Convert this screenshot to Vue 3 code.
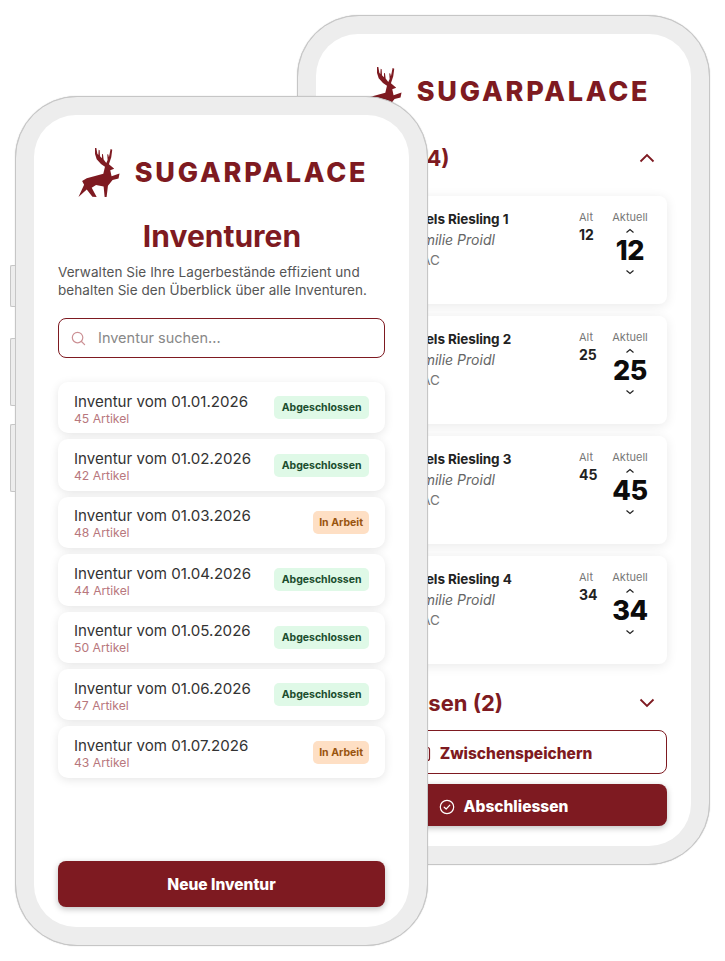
<script setup>
const inventuren = [
  { date: "01.01.2026", count: 45, done: true },
  { date: "01.02.2026", count: 42, done: true },
  { date: "01.03.2026", count: 48, done: false },
  { date: "01.04.2026", count: 44, done: true },
  { date: "01.05.2026", count: 50, done: true },
  { date: "01.06.2026", count: 47, done: true },
  { date: "01.07.2026", count: 43, done: false },
];

const weine = [
  { name: "Ried Stengels Riesling 1", alt: 12 },
  { name: "Ried Stengels Riesling 2", alt: 25 },
  { name: "Ried Stengels Riesling 3", alt: 45 },
  { name: "Ried Stengels Riesling 4", alt: 34 },
];

const stagPath =
  "M284 172 L288 172 L291 189 L294 193 L295 177 L298 179 L299 197 L305 203 L305 190 L308 191 L310 207 L318 217 L322 208 L321 191 L324 192 L326 200 L331 175 L336 177 L333 200 L326 221 L342 235 L330 239 L334 257 L358 249 L355 264 L337 269 L323 286 L319 320 L313 320 L310 288 L287 284 L274 292 L289 320 L276 319 L259 297 L234 320 L251 283 L245 272 L259 263 L309 250 L314 229 L302 220 L289 206 L284 190 Z";
</script>

<template>
  <div class="stage">
    <!-- hinteres Telefon: Inventur-Detail -->
    <div class="phone phone-back">
      <div class="screen">
        <div class="logo">
          <svg class="stag" viewBox="234 172 124 148"><path :d="stagPath" /></svg>
          <span class="logo-text">SUGARPALACE</span>
        </div>

        <div class="section-head first">
          <h2>Offene (4)</h2>
          <svg class="chevron" viewBox="0 0 16 10"><path d="M1.5 8.5 8 2l6.5 6.5" /></svg>
        </div>

        <div class="wines">
          <div v-for="w in weine" :key="w.name" class="wine">
            <div class="wine-info">
              <div class="wine-name">{{ w.name }}</div>
              <div class="wine-maker">Weingut Emilie Proidl</div>
              <div class="wine-region">Kamptal DAC</div>
            </div>
            <div class="col-alt">
              <span class="col-label">Alt</span>
              <span class="alt-value">{{ w.alt }}</span>
            </div>
            <div class="col-now">
              <span class="col-label">Aktuell</span>
              <svg class="step" viewBox="0 0 10 6"><path d="M1.5 4.5 5 1.5l3.5 3" /></svg>
              <span class="now-value">{{ w.alt }}</span>
              <svg class="step" viewBox="0 0 10 6"><path d="M1.5 1.5 5 4.5l3.5-3" /></svg>
            </div>
          </div>
        </div>

        <div class="section-head second">
          <h2>Abgelassen (2)</h2>
          <svg class="chevron" viewBox="0 0 16 10"><path d="M1.5 1.5 8 8l6.5-6.5" /></svg>
        </div>

        <button class="btn-outline">
          <svg class="btn-icon" viewBox="0 0 16 16"><rect x="1.5" y="1.5" width="13" height="13" rx="2" /></svg>
          Zwischenspeichern
        </button>
        <button class="btn-solid btn-finish">
          <svg class="btn-icon" viewBox="0 0 16 16">
            <circle cx="8" cy="8" r="6.7" />
            <path d="M5.2 8.2 7.2 10l3.6-3.8" />
          </svg>
          Abschliessen
        </button>
      </div>
    </div>

    <!-- vorderes Telefon: Inventurliste -->
    <div class="phone phone-front">
      <span class="side-btn side-1"></span>
      <span class="side-btn side-2"></span>
      <span class="side-btn side-3"></span>
      <div class="screen">
        <div class="logo">
          <svg class="stag" viewBox="234 172 124 148"><path :d="stagPath" /></svg>
          <span class="logo-text">SUGARPALACE</span>
        </div>

        <h1>Inventuren</h1>
        <p class="intro">
          Verwalten Sie Ihre Lagerbestände effizient und<br />
          behalten Sie den Überblick über alle Inventuren.
        </p>

        <div class="search">
          <svg class="search-icon" viewBox="0 0 16 16">
            <circle cx="7" cy="7" r="5.6" />
            <path d="m11.2 11.2 3.3 3.3" />
          </svg>
          <span>Inventur suchen...</span>
        </div>

        <div class="list">
          <div v-for="item in inventuren" :key="item.date" class="item">
            <div class="item-text">
              <div class="item-title">Inventur vom {{ item.date }}</div>
              <div class="item-sub">{{ item.count }} Artikel</div>
            </div>
            <span class="badge" :class="item.done ? 'done' : 'open'">
              {{ item.done ? "Abgeschlossen" : "In Arbeit" }}
            </span>
          </div>
        </div>

        <button class="btn-solid btn-new">Neue Inventur</button>
      </div>
    </div>
  </div>
</template>

<style>
body {
  background: #fff;
}
</style>

<style scoped>
.stage {
  position: relative;
  width: 725px;
  height: 961px;
  overflow: hidden;
  background: #fff;
  font-family: Inter, "Open Sans", sans-serif;
  color: #333;
}

.phone {
  position: absolute;
  width: 413px;
  height: 850px;
  box-sizing: border-box;
  padding: 18px;
  background: #ededed;
  border: 1px solid #c6c6c6;
  border-radius: 62px;
  box-shadow: 0 0 1px rgba(0, 0, 0, 0.3);
}

.phone-front {
  left: 15px;
  top: 96px;
}

.phone-back {
  left: 297px;
  top: 15px;
}

.side-btn {
  position: absolute;
  left: -6px;
  width: 5px;
  background: #ededed;
  border: 1px solid #c6c6c6;
  border-right: none;
  border-radius: 2px 0 0 2px;
  box-sizing: border-box;
}

.side-1 {
  top: 168px;
  height: 42px;
}

.side-2 {
  top: 241px;
  height: 68px;
}

.side-3 {
  top: 327px;
  height: 68px;
}

.screen {
  height: 100%;
  box-sizing: border-box;
  padding: 33px 24px 20px;
  background: #fff;
  border-radius: 42px;
  display: flex;
  flex-direction: column;
}

.logo {
  display: flex;
  align-items: center;
  justify-content: center;
  gap: 15px;
  height: 49px;
  margin-left: 3px;
}

.stag {
  width: 42px;
  height: 49px;
  flex: none;
  fill: #7e1a21;
}

.logo-text {
  font-size: 27px;
  font-weight: 800;
  letter-spacing: 2.8px;
  color: #7e1a21;
  line-height: 1;
}

h1 {
  margin: 20px 0 0 1px;
  font-size: 30px;
  line-height: 38px;
  font-weight: 700;
  text-align: center;
  color: #7e1a21;
}

.intro {
  margin: 8px 0 0;
  font-size: 13.5px;
  line-height: 18px;
  letter-spacing: 0.06px;
  color: #555;
  white-space: nowrap;
}

.search {
  margin-top: 19px;
  height: 40px;
  box-sizing: border-box;
  border: 1px solid #7e1a21;
  border-radius: 8px;
  display: flex;
  align-items: center;
  gap: 12px;
  padding: 0 12px;
  font-size: 14.5px;
  color: #888;
}

.search span {
  margin-top: -1px;
}

.search-icon {
  width: 15px;
  height: 15px;
  fill: none;
  stroke: #cc9195;
  stroke-width: 1.3;
  stroke-linecap: round;
}

.list {
  margin-top: 24px;
  display: flex;
  flex-direction: column;
  gap: 6px;
}

.item {
  height: 51.4px;
  box-sizing: border-box;
  padding: 0 16px;
  background: #fff;
  border-radius: 10px;
  box-shadow: 0 2px 10px rgba(0, 0, 0, 0.1);
  display: flex;
  align-items: center;
  justify-content: space-between;
}

.item-text {
  padding-top: 2px;
}

.item-title {
  font-size: 15.1px;
  line-height: 19px;
  color: #333;
}

.item-sub {
  margin-top: 1px;
  font-size: 12.2px;
  line-height: 14px;
  color: #b8777d;
}

.badge {
  height: 23px;
  box-sizing: border-box;
  border-radius: 5px;
  font-size: 10.5px;
  font-weight: 700;
  line-height: 23px;
}

.badge.done {
  padding: 0 7.5px;
  background: #dff9e7;
  color: #1b4d2e;
}

.badge.open {
  padding: 0 6px;
  background: #fedfc4;
  color: #99540f;
}

button {
  font-family: inherit;
  cursor: pointer;
  border-radius: 8px;
  display: flex;
  align-items: center;
  justify-content: center;
  gap: 9px;
  font-weight: 800;
}

.btn-solid {
  background: #7e1a21;
  color: #fff;
  border: none;
  box-shadow: 0 2px 6px rgba(0, 0, 0, 0.25);
}

.btn-new {
  margin-top: auto;
  height: 46px;
  font-size: 15.5px;
}

.section-head {
  display: flex;
  align-items: center;
  justify-content: space-between;
  padding-right: 12px;
  color: #7e1a21;
}

.section-head h2 {
  margin: 0;
  font-size: 22px;
  line-height: 28px;
  font-weight: 700;
}

.section-head.first {
  margin-top: 28px;
}

.section-head.second {
  margin-top: 25px;
}

.chevron {
  width: 16px;
  height: 10px;
  fill: none;
  stroke: #7e1a21;
  stroke-width: 1.8;
}

.wines {
  margin-top: 24px;
  display: flex;
  flex-direction: column;
  gap: 12px;
}

.wine {
  height: 108px;
  box-sizing: border-box;
  padding: 15px 19px 0 16px;
  background: #fff;
  border-radius: 8px;
  box-shadow: 0 2px 12px rgba(0, 0, 0, 0.09);
  display: flex;
  align-items: flex-start;
}

.wine-info {
  flex: 1;
  margin-top: -1px;
}

.wine-name {
  font-size: 13.5px;
  line-height: 18px;
  letter-spacing: -0.1px;
  font-weight: 700;
  color: #222;
}

.wine-maker {
  margin-top: 2px;
  font-size: 14px;
  line-height: 20px;
  font-style: italic;
  color: #666;
}

.wine-region {
  font-size: 13.5px;
  line-height: 20px;
  color: #777;
}

.col-alt,
.col-now {
  display: flex;
  flex-direction: column;
}

.col-alt {
  width: 33px;
  align-items: flex-start;
}

.col-now {
  width: 36px;
  align-items: center;
}

.col-label {
  font-size: 11px;
  line-height: 13px;
  color: #777;
}

.alt-value {
  margin-top: 2px;
  font-size: 14px;
  line-height: 18px;
  font-weight: 700;
  color: #222;
}

.step {
  width: 10px;
  height: 6px;
  margin-top: 4px;
  fill: none;
  stroke: #222;
  stroke-width: 1.2;
}

.now-value {
  margin-top: 1px;
  font-size: 27px;
  line-height: 32px;
  font-weight: 800;
  letter-spacing: -0.4px;
  color: #0c0c0c;
}

.col-now .step:last-child {
  margin-top: 2px;
}

.btn-outline {
  margin-top: 13px;
  height: 44px;
  padding-top: 5px;
  background: #fff;
  border: 1px solid #7e1a21;
  color: #7e1a21;
  font-size: 15.5px;
}

.btn-finish {
  margin-top: 10px;
  height: 43px;
  padding-top: 5px;
  font-size: 15.5px;
}

.btn-icon {
  width: 16px;
  height: 16px;
  fill: none;
  stroke: currentColor;
  stroke-width: 1.2;
  stroke-linecap: round;
  stroke-linejoin: round;
}
</style>
